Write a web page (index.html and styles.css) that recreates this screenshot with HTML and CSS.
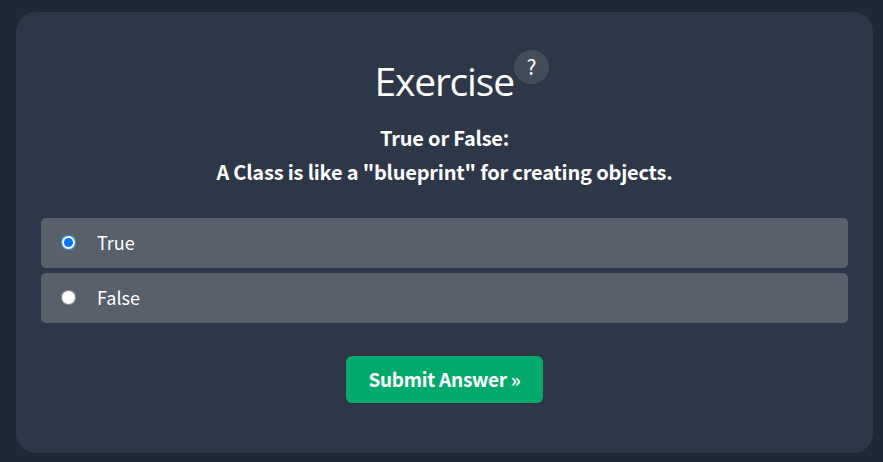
FILE: index.html
```html
<!DOCTYPE html>
<html lang="en">
<head>
<meta charset="utf-8">
<title>Exercise</title>
<link rel="stylesheet" href="styles.css">
</head>
<body>
<main class="exercise">
  <h2 class="title"><span class="title-text">Exercise</span><span class="help">?</span></h2>
  <p class="question"><span class="line line-one">True or False:</span><span class="line line-two">A Class is like a "blueprint" for creating objects.</span></p>
  <form class="form">
    <label class="option"><input class="radio" type="radio" name="answer" checked><span class="label label-true">True</span></label>
    <label class="option"><input class="radio" type="radio" name="answer"><span class="label label-false">False</span></label>
    <button class="submit" type="button"><span class="submit-text">Submit Answer »</span></button>
  </form>
</main>
</body>
</html>
```
FILE: styles.css
```css
* { box-sizing: border-box; }
body {
  margin: 0;
  height: 462px;
  overflow: hidden;
  padding: 12px 10px 9px 16px;
  background: #1d2a35;
  color: #fff;
  font-family: "Noto Sans CJK SC", sans-serif;
}
.exercise {
  height: 441px;
  padding: 38px 25px 0;
  border-radius: 20px;
  background: #2e3748;
}
.title {
  position: relative;
  display: flex;
  justify-content: center;
  margin: 0;
  height: 64px;
  font-family: "Open Sans", "Noto Sans", sans-serif;
  font-size: 39px;
  font-weight: 400;
  line-height: 62px;
}
.title-text { width: 140px; white-space: nowrap; letter-spacing: -1.2px; }
.help {
  position: absolute;
  left: 473px;
  top: 0;
  width: 35px;
  height: 34px;
  border-radius: 50%;
  background: #434c59;
  font-family: "Noto Sans CJK SC", sans-serif;
  font-size: 21px;
  line-height: 33px;
  text-align: center;
}
.question {
  display: flex;
  flex-direction: column;
  align-items: center;
  margin: 7px 0 0;
  font-size: 20px;
  font-weight: 700;
  line-height: 34px;
  letter-spacing: -0.2px;
}
.line { white-space: nowrap; }
.form {
  display: flex;
  flex-direction: column;
  gap: 5px;
  margin-top: 29px;
}
.option {
  display: flex;
  align-items: center;
  height: 50px;
  padding-left: 20px;
  border-radius: 5px;
  background: #58606c;
  font-size: 18px;
}
.label { padding-bottom: 2px; }
.radio { width: 15px; height: 15px; margin: 0 21px 2px 0; }
.submit {
  align-self: center;
  width: 197px;
  height: 47px;
  margin-top: 28px;
  padding: 0 0 2px;
  border: 0;
  border-radius: 6px;
  background: #04aa6d;
  color: #fff;
  font: 700 19px/45px "Noto Sans CJK SC", sans-serif;
  letter-spacing: -0.27px;
}
```
